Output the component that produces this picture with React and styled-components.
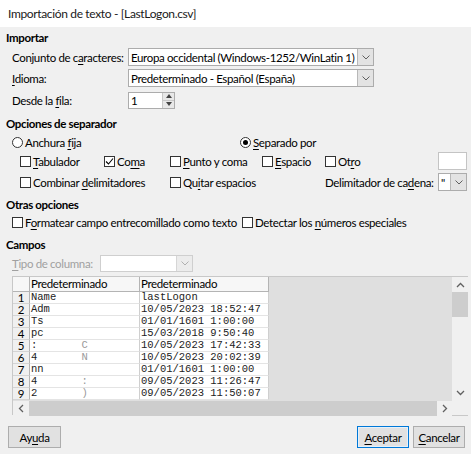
import React from "react";
import styled, { createGlobalStyle } from "styled-components";

const GlobalStyle = createGlobalStyle`
  html, body { margin: 0; padding: 0; background: #fff; }
  body {
    font-family: Lato, "Noto Sans", sans-serif;
    font-size: 11.5px;
    letter-spacing: -0.35px;
    color: #000;
  }
  * { box-sizing: border-box; }
`;

const Window = styled.div`
  width: 471px;
  height: 454px;
  display: flex;
  flex-direction: column;
  background: #f0f0f0;
`;

const TitleBar = styled.div`
  height: 27px;
  flex: none;
  background: #fff;
  display: flex;
  align-items: center;
  padding-left: 8px;
  font-size: 12px;
  color: #1a1a1a;
`;

const Body = styled.div`
  flex: 1;
  display: flex;
  flex-direction: column;
  padding: 4px 4px 0 6px;
`;

const Heading = styled.div`
  font-weight: bold;
  line-height: 14px;
  height: 14px;
  margin-top: ${(p) => p.$mt || 0}px;
`;

const Row = styled.div`
  display: flex;
  align-items: center;
  height: ${(p) => p.$h}px;
  margin-top: ${(p) => p.$mt || 0}px;
  padding-left: ${(p) => p.$indent || 0}px;
  white-space: nowrap;
`;

const Label = styled.span`
  flex: none;
  width: ${(p) => (p.$w ? `${p.$w}px` : "auto")};
  color: ${(p) => (p.$disabled ? "#a0a0a0" : "#000")};
`;

const Key = styled.span`
  text-decoration: underline;
  text-underline-offset: 2px;
`;

const Combo = styled.div`
  display: flex;
  flex: none;
  width: ${(p) => p.$w}px;
  height: ${(p) => p.$h || 18}px;
  margin-left: ${(p) => (p.$push ? "auto" : "0")};
  background: #fff;
  border: 1px solid ${(p) => (p.$disabled ? "#cfcfcf" : "#acacac")};
`;

const ComboText = styled.div`
  flex: 1;
  display: flex;
  align-items: center;
  padding-left: 2px;
  overflow: hidden;
  white-space: nowrap;
`;

const DropButton = styled.div`
  width: 16px;
  flex: none;
  display: flex;
  align-items: center;
  justify-content: center;
  background: ${(p) => (p.$disabled ? "#ececec" : "#e3e3e3")};
  border-left: 1px solid ${(p) => (p.$disabled ? "#d6d6d6" : "#b8b8b8")};
`;

const SpinButtons = styled.div`
  width: 12px;
  flex: none;
  display: flex;
  flex-direction: column;
  border-left: 1px solid #c8c8c8;
`;

const SpinPart = styled.div`
  flex: 1;
  display: flex;
  align-items: center;
  justify-content: center;
  background: #e8e8e8;
  border-top: ${(p) => (p.$bottom ? "1px solid #c8c8c8" : "none")};
`;

const TextField = styled.div`
  flex: none;
  width: 29px;
  height: 18px;
  margin-left: auto;
  background: #fff;
  border: 1px solid #c4c4c4;
`;

const Option = styled.span`
  display: flex;
  align-items: center;
  gap: 2px;
  flex: none;
  width: ${(p) => (p.$w ? `${p.$w}px` : "auto")};
`;

const Box = styled.span`
  width: 11px;
  height: 11px;
  flex: none;
  display: inline-flex;
  align-items: center;
  justify-content: center;
  background: #fff;
  border: 1px solid #333;
`;

const Radio = styled.span`
  width: 11px;
  height: 11px;
  flex: none;
  display: inline-flex;
  align-items: center;
  justify-content: center;
  border: 1px solid #333;
  border-radius: 50%;
  background: #fff;
  &::after {
    content: "";
    width: 5px;
    height: 5px;
    border-radius: 50%;
    background: ${(p) => (p.$on ? "#000" : "transparent")};
  }
`;

const TableFrame = styled.div`
  margin-left: 6px;
  width: 456px;
  height: 139px;
  display: grid;
  grid-template-columns: 1fr 16px;
  grid-template-rows: 124px 15px;
  border-left: 1px solid #c8c8c8;
  border-top: 1px solid #c8c8c8;
`;

const DataGrid = styled.div`
  display: grid;
  grid-template-columns: 17px 110px 129px 1fr;
  grid-template-rows: 15px repeat(9, 12px);
  background: #dfdfdf;
  overflow: hidden;
`;

const HeadCell = styled.div`
  background: #f7f7f7;
  border-right: 1px solid #b4b4b4;
  border-bottom: 1px solid #b4b4b4;
  line-height: 14px;
  padding-left: 1px;
  white-space: nowrap;
  overflow: hidden;
`;

const RowNum = styled.div`
  background: #f0f0f0;
  border-right: 1px solid #b4b4b4;
  border-bottom: 1px solid #d4d4d4;
  font-size: 11.5px;
  line-height: 12px;
  text-align: center;
  overflow: hidden;
`;

const Cell = styled.div`
  background: #fff;
  border-right: 1px solid #cfcfcf;
  border-bottom: 1px solid #e4e4e4;
  font-family: "Liberation Mono", monospace;
  font-size: 10.5px;
  letter-spacing: 0;
  line-height: 11px;
  padding-left: 1px;
  white-space: pre;
  overflow: hidden;
  color: #222;
`;

const Faded = styled.span`
  color: #9a9a9a;
`;

const Filler = styled.div`
  background: #dfdfdf;
`;

const VScroll = styled.div`
  display: flex;
  flex-direction: column;
  background: #f0f0f0;
`;

const HScroll = styled.div`
  display: flex;
  background: #f0f0f0;
`;

const Arrow = styled.div`
  flex: none;
  width: ${(p) => p.$w}px;
  height: ${(p) => p.$h}px;
  display: flex;
  align-items: center;
  justify-content: center;
`;

const Thumb = styled.div`
  background: #cdcdcd;
  flex: ${(p) => (p.$grow ? 1 : "none")};
  height: ${(p) => (p.$h ? `${p.$h}px` : "auto")};
`;

const Track = styled.div`
  flex: 1;
`;

const Corner = styled.div`
  background: #f0f0f0;
  border-bottom: 1px solid #c8c8c8;
`;

const ButtonRow = styled.div`
  display: flex;
  align-items: center;
  margin-top: 11px;
  padding: 0 2px;
  gap: 4px;
`;

const Button = styled.div`
  width: ${(p) => p.$w}px;
  height: 22px;
  margin-left: ${(p) => (p.$push ? "auto" : "0")};
  display: flex;
  align-items: center;
  justify-content: center;
  background: #e1e1e1;
  border: 1px solid ${(p) => (p.$default ? "#0078d7" : "#adadad")};
  box-shadow: ${(p) => (p.$default ? "inset 0 0 0 1px #e5f1fb" : "none")};
`;

const Chevron = ({ color = "#606060" }) => (
  <svg width="8" height="5" viewBox="0 0 8 5">
    <path d="M0.5 0.5 L4 4 L7.5 0.5" fill="none" stroke={color} strokeWidth="1" />
  </svg>
);

const Check = () => (
  <svg width="9" height="9" viewBox="0 0 9 9">
    <path d="M1 4.5 L3.5 7 L8 1.5" fill="none" stroke="#000" strokeWidth="1.1" />
  </svg>
);

const Tri = ({ up }) => (
  <svg width="6" height="4" viewBox="0 0 6 4">
    <path d={up ? "M0 4 L3 0 L6 4 Z" : "M0 0 L3 4 L6 0 Z"} fill="#444" />
  </svg>
);

const ScrollArrow = ({ dir }) => {
  const d = {
    up: "M1 5 L4.5 1.5 L8 5",
    down: "M1 1 L4.5 4.5 L8 1",
    left: "M5 1 L1.5 4.5 L5 8",
    right: "M1 1 L4.5 4.5 L1 8",
  }[dir];
  const vertical = dir === "up" || dir === "down";
  return (
    <svg width={vertical ? 9 : 6} height={vertical ? 6 : 9} viewBox={vertical ? "0 0 9 6" : "0 0 6 9"}>
      <path d={d} fill="none" stroke="#606060" strokeWidth="1.3" />
    </svg>
  );
};

const rows = [
  ["Name", "lastLogon"],
  ["Adm", "10/05/2023 18:52:47"],
  ["Ts", "01/01/1601 1:00:00"],
  ["pc", "15/03/2018 9:50:40"],
  [[":", "C"], "10/05/2023 17:42:33"],
  [["4", "N"], "10/05/2023 20:02:39"],
  ["nn", "01/01/1601 1:00:00"],
  [["4", ":"], "09/05/2023 11:26:47"],
  [["2", ")"], "09/05/2023 11:50:07"],
];

const NameCell = ({ value }) =>
  Array.isArray(value) ? (
    <Cell>
      {value[0]}
      <Faded>{"       " + value[1]}</Faded>
    </Cell>
  ) : (
    <Cell>{value}</Cell>
  );

export default function App() {
  return (
    <>
      <GlobalStyle />
      <Window>
        <TitleBar>Importación de texto - [LastLogon.csv]</TitleBar>
        <Body>
          <Heading>Importar</Heading>
          <Row $h={18} $mt={3} $indent={6}>
            <Label $w={116}>
              Conjunto de c<Key>a</Key>racteres:
            </Label>
            <Combo $w={246}>
              <ComboText>Europa occidental (Windows-1252/WinLatin 1)</ComboText>
              <DropButton>
                <Chevron />
              </DropButton>
            </Combo>
          </Row>
          <Row $h={18} $mt={3} $indent={6}>
            <Label $w={116}>
              <Key>I</Key>dioma:
            </Label>
            <Combo $w={246}>
              <ComboText>Predeterminado - Español (España)</ComboText>
              <DropButton>
                <Chevron />
              </DropButton>
            </Combo>
          </Row>
          <Row $h={18} $mt={4} $indent={6}>
            <Label $w={116}>
              Desde la <Key>f</Key>ila:
            </Label>
            <Combo $w={47} $h={17}>
              <ComboText>1</ComboText>
              <SpinButtons>
                <SpinPart>
                  <Tri up />
                </SpinPart>
                <SpinPart $bottom>
                  <Tri />
                </SpinPart>
              </SpinButtons>
            </Combo>
          </Row>

          <Heading $mt={8}>Opciones de separador</Heading>
          <Row $h={18} $mt={2} $indent={6}>
            <Option $w={228}>
              <Radio />
              <span>
                Anchura <Key>f</Key>ija
              </span>
            </Option>
            <Option>
              <Radio $on />
              <span>
                <Key>S</Key>eparado por
              </span>
            </Option>
          </Row>
          <Row $h={20} $indent={14}>
            <Option $w={84}>
              <Box />
              <span>
                <Key>T</Key>abulador
              </span>
            </Option>
            <Option $w={66}>
              <Box>
                <Check />
              </Box>
              <span>
                Co<Key>m</Key>a
              </span>
            </Option>
            <Option $w={92}>
              <Box />
              <span>
                <Key>P</Key>unto y coma
              </span>
            </Option>
            <Option $w={63}>
              <Box />
              <span>
                <Key>E</Key>spacio
              </span>
            </Option>
            <Option>
              <Box />
              <span>
                Ot<Key>r</Key>o
              </span>
            </Option>
            <TextField />
          </Row>
          <Row $h={20} $mt={1} $indent={14}>
            <Option $w={150}>
              <Box />
              <span>
                Combinar <Key>d</Key>elimitadores
              </span>
            </Option>
            <Option $w={155}>
              <Box />
              <span>
                Qu<Key>i</Key>tar espacios
              </span>
            </Option>
            <Label>
              Delimitador de ca<Key>d</Key>ena:
            </Label>
            <Combo $w={29} $push>
              <ComboText>"</ComboText>
              <DropButton>
                <Chevron />
              </DropButton>
            </Combo>
          </Row>

          <Heading $mt={6}>Otras opciones</Heading>
          <Row $h={18} $mt={1} $indent={6}>
            <Option $w={230}>
              <Box />
              <span>
                F<Key>o</Key>rmatear campo entrecomillado como texto
              </span>
            </Option>
            <Option>
              <Box />
              <span>
                Detectar los <Key>n</Key>úmeros especiales
              </span>
            </Option>
          </Row>

          <Heading $mt={7}>Campos</Heading>
          <Row $h={17} $mt={3} $indent={6}>
            <Label $w={88} $disabled>
              <Key>T</Key>ipo de columna:
            </Label>
            <Combo $w={93} $h={17} $disabled>
              <ComboText />
              <DropButton $disabled>
                <Chevron color="#b0b0b0" />
              </DropButton>
            </Combo>
          </Row>

          <Row $h={4} />
          <TableFrame>
            <DataGrid>
              <HeadCell />
              <HeadCell>Predeterminado</HeadCell>
              <HeadCell>Predeterminado</HeadCell>
              <Filler />
              {rows.map(([name, logon], i) => (
                <React.Fragment key={i}>
                  <RowNum>{i + 1}</RowNum>
                  <NameCell value={name} />
                  <Cell>{logon}</Cell>
                  <Filler />
                </React.Fragment>
              ))}
            </DataGrid>
            <VScroll>
              <Arrow $w={16} $h={15}>
                <ScrollArrow dir="up" />
              </Arrow>
              <Thumb $h={25} />
              <Track />
              <Arrow $w={16} $h={16}>
                <ScrollArrow dir="down" />
              </Arrow>
            </VScroll>
            <HScroll>
              <Arrow $w={16} $h={15}>
                <ScrollArrow dir="left" />
              </Arrow>
              <Thumb $grow />
              <Arrow $w={15} $h={15}>
                <ScrollArrow dir="right" />
              </Arrow>
            </HScroll>
            <Corner />
          </TableFrame>

          <ButtonRow>
            <Button $w={53}>
              <span>
                Ay<Key>u</Key>da
              </span>
            </Button>
            <Button $w={52} $push $default>
              <span>
                <Key>A</Key>ceptar
              </span>
            </Button>
            <Button $w={52}>
              <span>
                <Key>C</Key>ancelar
              </span>
            </Button>
          </ButtonRow>
        </Body>
      </Window>
    </>
  );
}
